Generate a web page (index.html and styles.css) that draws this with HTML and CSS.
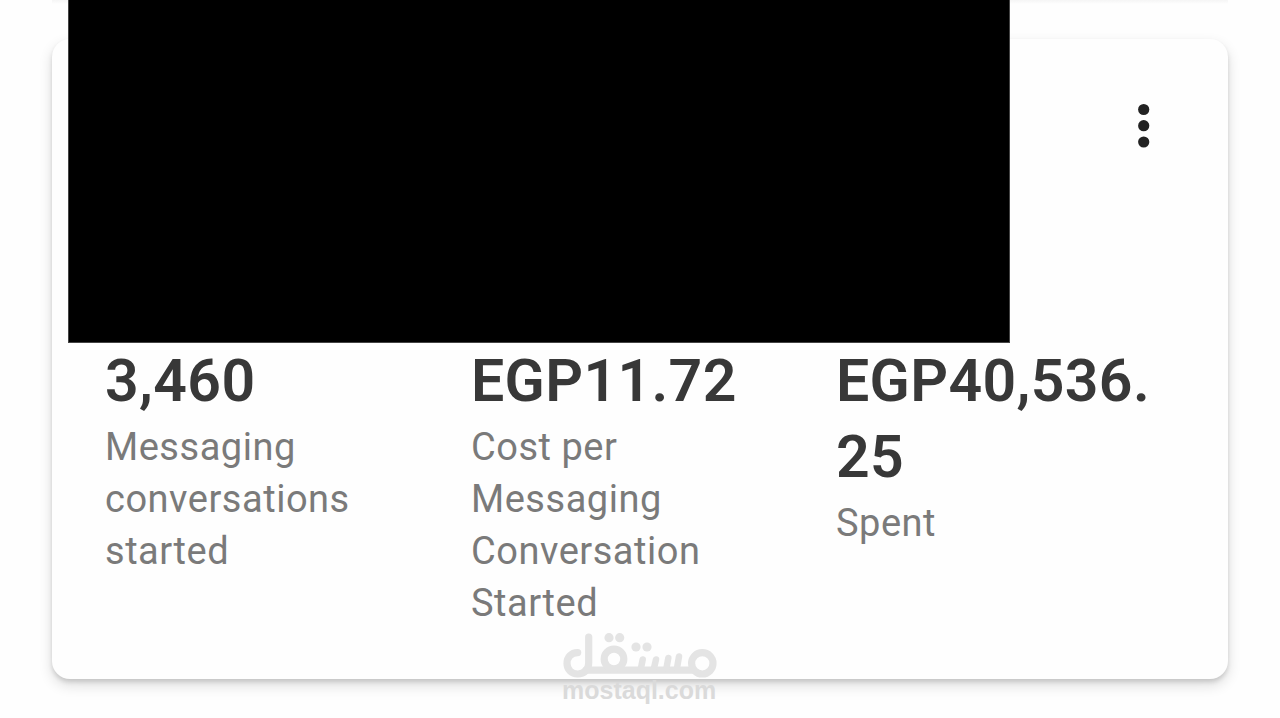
FILE: index.html
```html
<!DOCTYPE html>
<html lang="en">
<head>
<meta charset="utf-8">
<title>Campaign results</title>
<link rel="stylesheet" href="styles.css">
</head>
<body>
<div class="previous-card"></div>
<main class="card">
  <header class="card-header">
    <div class="redacted"></div>
    <svg class="menu" width="16" height="48" viewBox="0 0 16 48" fill="#222">
      <circle cx="7.700" cy="7.500" r="5.600"/><circle cx="7.700" cy="23.700" r="5.600"/><circle cx="7.700" cy="40" r="5.600"/>
    </svg>
  </header>
  <section class="metrics">
    <div class="metric"><div class="value">3,460</div><div class="label">Messaging<br>conversations<br>started</div></div>
    <div class="metric"><div class="value">EGP11.72</div><div class="label">Cost per<br>Messaging<br>Conversation<br>Started</div></div>
    <div class="metric"><div class="value">EGP40,536.<br>25</div><div class="label">Spent</div></div>
  </section>
</main>
<div class="watermark">
  <svg class="watermark-logo" width="156" height="48" viewBox="0 0 156 48" fill="none" stroke="#e4e4e4" stroke-width="7.200" stroke-linecap="round" stroke-linejoin="round">
    <path d="M15.700 21.600C9 21.600 5 26.500 5 32.300C5 38.500 9.500 43 15.700 43C22.500 43 26.700 38 26.700 32V6"/>
    <path d="M24 39.200H130"/>
    <circle cx="52" cy="28" r="9.800"/>
    <circle cx="140.300" cy="32.300" r="10.700"/>
    <path stroke-width="6.500" d="M79 37L80.700 28.500M92 37L94 28.500M104.500 37L106.300 27M115 37L117 25.500"/>
    <g fill="#e4e4e4" stroke="none"><circle cx="47" cy="6.700" r="4.600"/><circle cx="57.700" cy="6.700" r="4.600"/><circle cx="74" cy="16" r="4.600"/><circle cx="85" cy="16" r="4.600"/></g>
  </svg>
  <div class="watermark-name">mostaql.com</div>
</div>
</body>
</html>
```
FILE: styles.css
```css
* { box-sizing: border-box; }
body {
  margin: 0;
  height: 718px;
  overflow: hidden;
  position: relative;
  background: #fefefe;
  font-family: Roboto, "Liberation Sans", sans-serif;
}
.previous-card {
  height: 4px;
  margin: 0 52px 35px;
  background: linear-gradient(#f5f5f5, #fefefe);
}
.card {
  width: 1176px;
  height: 640px;
  margin-left: 52px;
  border-radius: 18px;
  background: #fefefe;
  box-shadow: 0 6px 14px rgba(0, 0, 0, .14), 0 3px 4px rgba(0, 0, 0, .12);
}
.card-header {
  display: flex;
  height: 304px;
  padding-left: 16px;
}
.redacted {
  width: 942px;
  height: 343px;
  margin-top: -39px;
  background: #000;
  border: solid #444;
  border-width: 0 1px 1px;
}
.menu { margin: 63px 0 0 126px; }
.metrics {
  display: grid;
  grid-template-columns: 366px 365px 1fr;
  padding-left: 53px;
}
.value {
  font-size: 59px;
  line-height: 76px;
  font-weight: 600;
  letter-spacing: .35px;
  color: #383838;
  white-space: nowrap;
}
.label {
  margin-top: 2px;
  font-size: 38px;
  line-height: 52px;
  letter-spacing: .52px;
  color: #7a7a7a;
  white-space: nowrap;
}
.watermark {
  position: absolute;
  left: 562px;
  top: 631px;
  width: 156px;
}
.watermark-logo { display: block; }
.watermark-name {
  margin-top: -2px;
  font: bold 25px/26px "Liberation Sans", sans-serif;
  letter-spacing: 0;
  color: #dadada;
  white-space: nowrap;
}
```
